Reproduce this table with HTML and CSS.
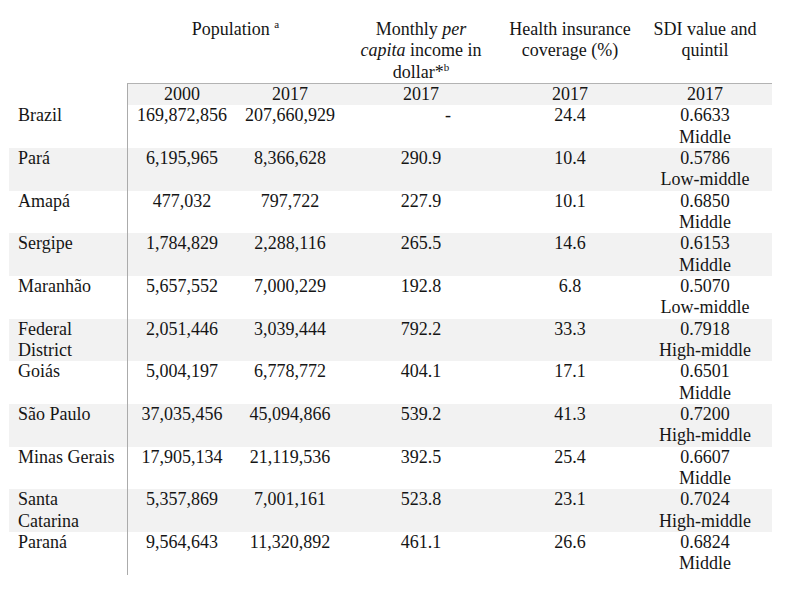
FILE: index.html
```html
<!DOCTYPE html>
<html lang="en">
<head>
<meta charset="utf-8">
<title>Population, income, health insurance and SDI</title>
<link rel="stylesheet" href="styles.css">
</head>
<body>
<table class="data">
  <colgroup>
    <col class="c-label">
    <col class="c-pop">
    <col class="c-pop2">
    <col class="c-inc">
    <col class="c-hi">
    <col class="c-sdi">
  </colgroup>
  <thead>
    <tr class="head">
      <th></th>
      <th colspan="2">Population <sup>a</sup></th>
      <th>Monthly <i>per</i><br><i>capita</i> income in<br>dollar*<sup>b</sup></th>
      <th>Health insurance<br>coverage (%)</th>
      <th class="sdi">SDI value and<br>quintil</th>
    </tr>
    <tr class="years">
      <td class="blank"></td>
      <td class="first">2000</td>
      <td>2017</td>
      <td>2017</td>
      <td>2017</td>
      <td class="sdi">2017</td>
    </tr>
  </thead>
  <tbody>
    <tr><td class="label">Brazil</td><td class="first">169,872,856</td><td>207,660,929</td><td><span class="dash">-</span></td><td>24.4</td><td class="sdi">0.6633<br>Middle</td></tr>
    <tr class="alt"><td class="label">Pará</td><td class="first">6,195,965</td><td>8,366,628</td><td>290.9</td><td>10.4</td><td class="sdi">0.5786<br>Low-middle</td></tr>
    <tr><td class="label">Amapá</td><td class="first">477,032</td><td>797,722</td><td>227.9</td><td>10.1</td><td class="sdi">0.6850<br>Middle</td></tr>
    <tr class="alt"><td class="label">Sergipe</td><td class="first">1,784,829</td><td>2,288,116</td><td>265.5</td><td>14.6</td><td class="sdi">0.6153<br>Middle</td></tr>
    <tr><td class="label">Maranhão</td><td class="first">5,657,552</td><td>7,000,229</td><td>192.8</td><td>6.8</td><td class="sdi">0.5070<br>Low-middle</td></tr>
    <tr class="alt"><td class="label">Federal District</td><td class="first">2,051,446</td><td>3,039,444</td><td>792.2</td><td>33.3</td><td class="sdi">0.7918<br>High-middle</td></tr>
    <tr><td class="label">Goiás</td><td class="first">5,004,197</td><td>6,778,772</td><td>404.1</td><td>17.1</td><td class="sdi">0.6501<br>Middle</td></tr>
    <tr class="alt"><td class="label">São Paulo</td><td class="first">37,035,456</td><td>45,094,866</td><td>539.2</td><td>41.3</td><td class="sdi">0.7200<br>High-middle</td></tr>
    <tr><td class="label">Minas Gerais</td><td class="first">17,905,134</td><td>21,119,536</td><td>392.5</td><td>25.4</td><td class="sdi">0.6607<br>Middle</td></tr>
    <tr class="alt"><td class="label">Santa Catarina</td><td class="first">5,357,869</td><td>7,001,161</td><td>523.8</td><td>23.1</td><td class="sdi">0.7024<br>High-middle</td></tr>
    <tr><td class="label">Paraná</td><td class="first">9,564,643</td><td>11,320,892</td><td>461.1</td><td>26.6</td><td class="sdi">0.6824<br>Middle</td></tr>
  </tbody>
</table>
</body>
</html>
```
FILE: styles.css
```css
html, body {
  margin: 0;
  padding: 0;
  background: #ffffff;
}

body {
  font-family: "Liberation Serif", "Times New Roman", serif;
  font-size: 18px;
  line-height: 21.33px;
  color: #151515;
}

.data {
  margin: 19px 0 0 9px;
  width: 763px;
  table-layout: fixed;
  border-collapse: separate;
  border-spacing: 0;
}

.c-label { width: 118px; }
.c-pop { width: 109px; }
.c-pop2 { width: 108px; }
.c-inc { width: 154px; }
.c-hi { width: 144px; }
.c-sdi { width: 130px; }

.data th,
.data td {
  padding: 0;
  text-align: center;
  vertical-align: top;
  font-weight: normal;
}

.data .sdi {
  padding-right: 4px;
}

.head th {
  height: 64px;
}

sup {
  font-size: 11px;
  line-height: 0;
  vertical-align: 7px;
}

.years td {
  height: 21.33px;
  background: #f2f2f2;
  border-top: 1px solid #b3b3b3;
}

.years td.blank {
  background: #ffffff;
  border-top: none;
}

.data td.first {
  border-left: 1px solid #ababab;
}

tbody td {
  height: 42.65px;
}

tbody tr.alt td {
  background: #f2f2f2;
}

.data td.label {
  text-align: left;
  padding: 0 8px 0 9px;
}

.dash {
  display: inline-block;
  padding-left: 54px;
}
```
